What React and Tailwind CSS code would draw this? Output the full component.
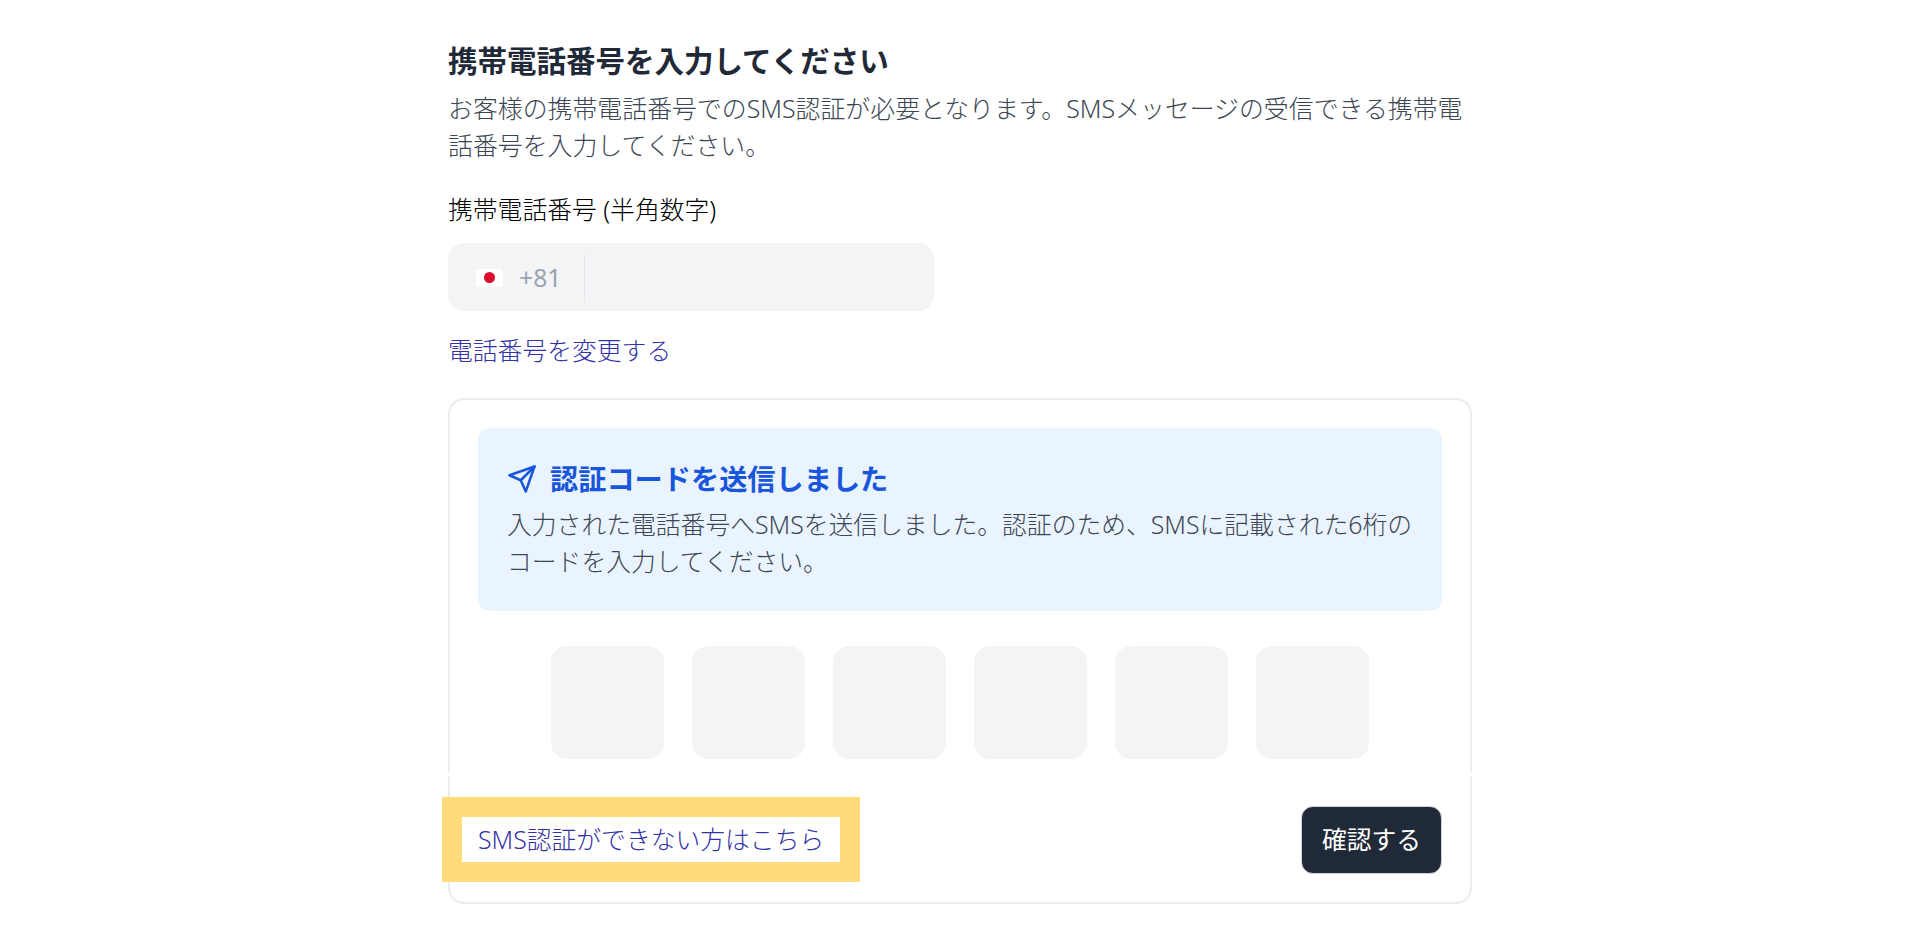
import React from "react";
import { FiSend } from "react-icons/fi";

const font = "font-['Noto_Sans','Noto_Sans_CJK_JP',sans-serif]";

function CodeBox() {
  return <div className="w-[113px] h-[113px] rounded-2xl bg-[#f3f4f6]" />;
}

export default function App() {
  return (
    <div className={`${font} min-h-[940px] bg-white`}>
      <div className="w-[1024px] mx-auto pt-[41px]">
        <h1 className="text-[29.5px] leading-10 font-bold text-[#1f2937]">携帯電話番号を入力してください</h1>
        <p className="mt-[9px] text-[24.9px] leading-[36.5px] font-light text-[#3d4654]">
          お客様の携帯電話番号でのSMS認証が必要となります。SMSメッセージの受信できる携帯電話番号を入力してください。
        </p>

        <label className="block mt-[26px] text-[24.8px] leading-10 font-light text-black">携帯電話番号 (半角数字)</label>
        <div className="mt-[14px] w-[486px] h-[68px] rounded-2xl bg-[#f3f4f6] flex items-center pl-7 pt-px">
          <div className="w-[27px] h-[18px] rounded-[2px] bg-white flex items-center justify-center">
            <div className="w-[11px] h-[11px] rounded-full bg-[#dc0a2d]" />
          </div>
          <span className="ml-[16px] text-[24.8px] text-[#9ca3af]">+81</span>
          <div className="ml-[22px] w-px h-[48px] bg-[#e5e7eb]" />
        </div>

        <a className="block mt-[19px] text-[24.8px] leading-10 font-light text-[#3332a8]">電話番号を変更する</a>

        <div className="mt-7 flex flex-col gap-[4px]">
          <div className="h-[374px] border-x-2 border-t-2 border-[#ebecef] rounded-t-2xl px-7 pt-7">
            <div className="h-[183px] rounded-xl bg-[#eaf4ff] px-[29px] pt-[31px]">
              <div className="flex items-center gap-[13px] h-10">
                <FiSend className="w-[30px] h-[30px] text-[#1a56db]" />
                <span className="text-[28.2px] font-bold text-[#1a56db]">認証コードを送信しました</span>
              </div>
              <p className="mt-[7px] text-[24.8px] leading-[37px] font-light text-[#3d4654]">
                入力された電話番号へSMSを送信しました。認証のため、SMSに記載された6桁のコードを入力してください。
              </p>
            </div>
            <div className="mt-[35px] flex justify-center gap-7">
              <CodeBox />
              <CodeBox />
              <CodeBox />
              <CodeBox />
              <CodeBox />
              <CodeBox />
            </div>
          </div>
          <div className="h-[128px] border-x-2 border-b-2 border-[#ebecef] rounded-b-2xl pr-7 pt-[21px] flex justify-between items-start">
            <a className="-ml-[8px] border-[20px] border-[#ffdb7a] bg-white px-4 h-[85px] flex items-center text-[24.8px] font-light text-[#3332a8]">
              SMS認証ができない方はこちら
            </a>
            <button className="mt-[9px] w-[141px] h-[68px] rounded-xl bg-[#1f2937] border border-[#d1d5db] text-white text-[24.8px]">
              確認する
            </button>
          </div>
        </div>
      </div>
    </div>
  );
}
